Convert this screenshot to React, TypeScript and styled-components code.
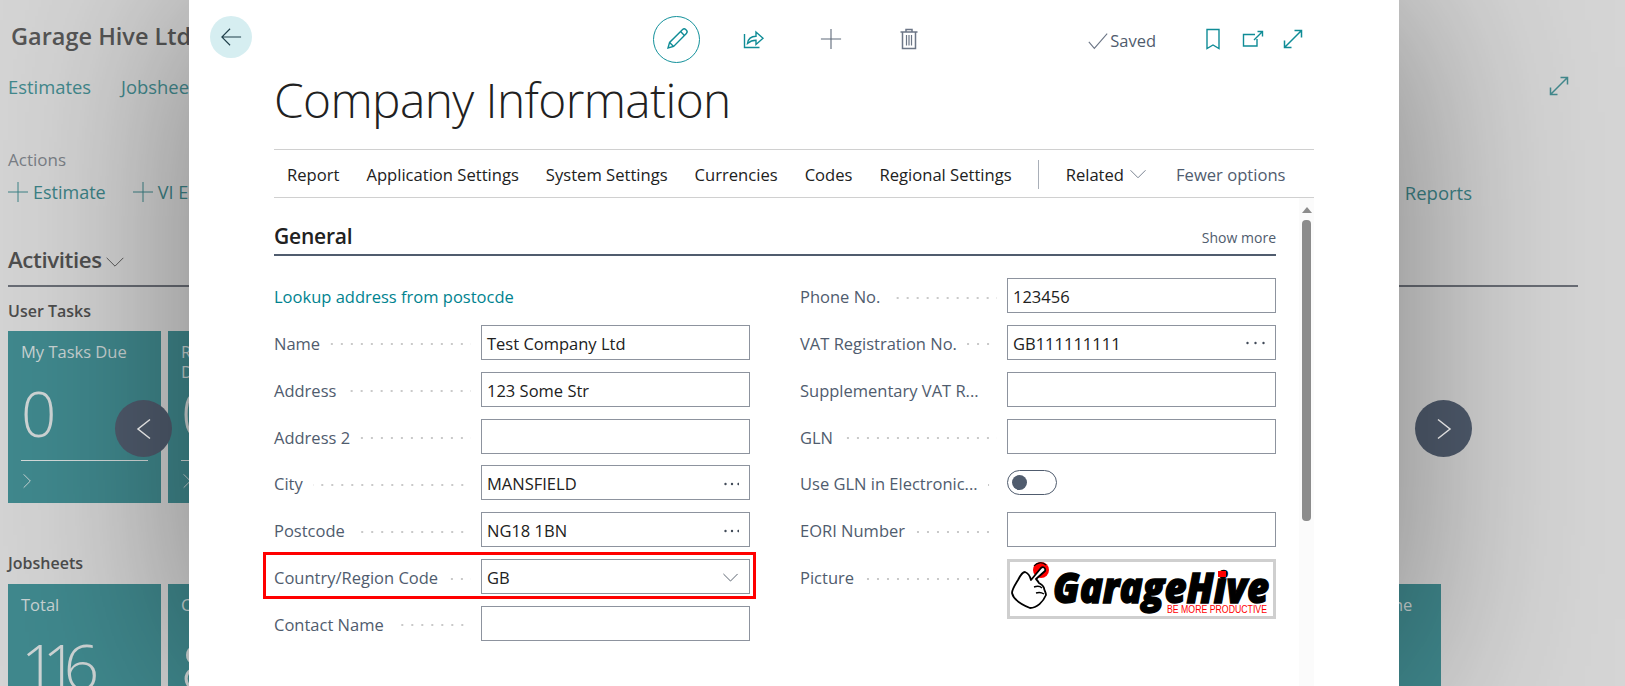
import React from "react";
import styled, { createGlobalStyle } from "styled-components";

const GlobalStyle = createGlobalStyle`
  html, body {
    margin: 0;
    height: 100%;
    overflow: hidden;
    background: #d5d5d5;
  }
  #root {
    height: 100%;
  }
  * {
    box-sizing: border-box;
  }
`;

const Page = styled.div`
  position: relative;
  width: 1625px;
  height: 686px;
  overflow: hidden;
  font-family: "Open Sans", "Liberation Sans", sans-serif;
  font-size: 16.5px;
`;

/* the role centre page, dimmed behind the dialog */
const Backdrop = styled.div`
  width: 1570px;
  margin-left: 8px;
  padding-top: 22px;
`;

const Brand = styled.div`
  height: 28px;
  padding-left: 3px;
  line-height: 28px;
  font-size: 23.5px;
  font-weight: 600;
  color: #565656;
  white-space: nowrap;
`;

const NavRow = styled.div`
  height: 28px;
  margin-top: 22px;
  padding-right: 9px;
  display: flex;
  align-items: center;
  gap: 30px;
  font-size: 18.4px;
  color: #42898d;
  svg {
    margin-left: auto;
  }
`;

const ActionsLabel = styled.div`
  height: 24px;
  margin-top: 48px;
  line-height: 24px;
  font-size: 17px;
  color: #7a7f86;
`;

const ActionsRow = styled.div`
  height: 28px;
  margin-top: 6px;
  padding-right: 106px;
  display: flex;
  align-items: center;
  font-size: 18px;
  color: #3c8286;
`;

const AddLink = styled.div<{ $left?: number }>`
  display: flex;
  align-items: center;
  gap: 5px;
  margin-left: ${(p) => p.$left ?? 0}px;
`;

const ReportsLink = styled.div`
  margin-left: auto;
  font-size: 18.5px;
`;

const ActivitiesHead = styled.div`
  height: 44px;
  margin-top: 37px;
  display: flex;
  align-items: flex-start;
  gap: 3px;
  border-bottom: 2px solid #696d75;
  font-size: 22.3px;
  font-weight: 600;
  line-height: 34px;
  color: #4f4f4f;
  letter-spacing: -0.4px;
  svg {
    margin-top: 9px;
  }
`;

const GroupLabel = styled.div<{ $top: number }>`
  height: 20px;
  margin-top: ${(p) => p.$top}px;
  line-height: 20px;
  font-size: 16px;
  font-weight: 600;
  color: #4d4d4d;
`;

const TileRow = styled.div<{ $top: number }>`
  margin-top: ${(p) => p.$top}px;
  display: flex;
  gap: 7px;
`;

const Tile = styled.div<{ $push?: boolean }>`
  flex: none;
  width: 153px;
  height: 172px;
  margin-left: ${(p) => (p.$push ? "auto" : "0")};
  margin-right: ${(p) => (p.$push ? "137px" : "0")};
  padding: 11px 13px 0;
  background: #40898e;
  color: #c9d4d4;
`;

const TileTitle = styled.div`
  height: 40px;
  font-size: 16.5px;
  line-height: 20px;
  white-space: pre-line;
`;

const TileValue = styled.div`
  height: 62px;
  font-size: 62px;
  font-weight: 300;
  line-height: 62px;
  color: #d0d6d6;
  letter-spacing: -14px;
`;

const TileRule = styled.div`
  height: 1px;
  margin-top: 16px;
  background: #d5dcdc;
`;

const TileLink = styled.div`
  margin: 10px 0 0 -4px;
`;

const Carousel = styled.div<{ $left: number }>`
  position: absolute;
  top: 400px;
  left: ${(p) => p.$left}px;
  width: 57px;
  height: 57px;
  border-radius: 50%;
  background: #505c6e;
  display: flex;
  align-items: center;
  justify-content: center;
`;

/* dialog */
const Dialog = styled.div`
  position: absolute;
  top: 0;
  left: 189px;
  width: 1210px;
  height: 686px;
  background: #fff;
  box-shadow: 0 0 190px rgba(0, 0, 0, 0.42);
  display: flex;
  flex-direction: column;
`;

const Header = styled.div`
  flex: none;
  height: 46px;
  margin-top: 16px;
  padding: 0 86px 0 21px;
  display: flex;
  align-items: center;
`;

const BackButton = styled.div`
  width: 42px;
  height: 42px;
  margin-top: -4px;
  border-radius: 50%;
  background: #d6eef1;
  display: flex;
  align-items: center;
  justify-content: center;
`;

const CommandGroup = styled.div`
  margin-left: 386px;
  display: flex;
`;

const CommandButton = styled.div`
  width: 77.3px;
  height: 46px;
  display: flex;
  align-items: center;
  justify-content: center;
`;

const EditRing = styled.div`
  width: 47px;
  height: 47px;
  border: 1px solid #13919b;
  border-radius: 50%;
  display: flex;
  align-items: center;
  justify-content: center;
`;

const SavedState = styled.div`
  margin: 3px 0 0 140px;
  display: flex;
  align-items: center;
  gap: 1px;
  color: #505c6e;
`;

const HeaderIcons = styled.div`
  margin-left: auto;
  display: flex;
`;

const HeaderIcon = styled.div`
  width: 40px;
  height: 46px;
  display: flex;
  align-items: center;
  justify-content: center;
`;

const Title = styled.h1`
  flex: none;
  height: 64px;
  margin: 6px 0 0 85px;
  font-size: 47.8px;
  font-weight: 300;
  line-height: 64px;
  color: #212121;
  letter-spacing: -0.6px;
`;

const ActionBar = styled.div`
  flex: none;
  height: 49px;
  margin: 17px 85px 0;
  padding: 1px 0 0 13px;
  border-top: 1px solid #d0d0d0;
  border-bottom: 1px solid #d0d0d0;
  display: flex;
  align-items: center;
  color: #212121;
  font-size: 16.6px;
`;

const BarItem = styled.div<{ $left: number }>`
  margin-left: ${(p) => p.$left}px;
  display: flex;
  align-items: center;
  gap: 5px;
  white-space: nowrap;
`;

const BarDivider = styled.div`
  width: 1px;
  height: 29px;
  margin-left: 26px;
  background: #a9afb8;
`;

const FewerOptions = styled(BarItem)`
  color: #505c6e;
`;

const Body = styled.div`
  flex: 1;
  min-height: 0;
  margin: 0 85px;
  display: flex;
`;

const Content = styled.div`
  flex: none;
  width: 1002px;
`;

const Scrollbar = styled.div`
  flex: none;
  width: 15px;
  margin-left: 23px;
  padding-top: 9px;
  background: #fbfbfb;
  display: flex;
  flex-direction: column;
  align-items: center;
`;

const ScrollArrow = styled.div`
  width: 0;
  height: 0;
  border-left: 5px solid transparent;
  border-right: 5px solid transparent;
  border-bottom: 6px solid #8c8c8c;
`;

const ScrollThumb = styled.div`
  width: 9px;
  height: 301px;
  margin-top: 7px;
  border-radius: 4px;
  background: #8c8c8c;
`;

const SectionHead = styled.div`
  height: 58px;
  padding-bottom: 4px;
  border-bottom: 2px solid #505c6e;
  display: flex;
  align-items: flex-end;
  justify-content: space-between;
`;

const SectionTitle = styled.div`
  font-size: 21px;
  font-weight: 600;
  line-height: 28px;
  color: #212121;
  letter-spacing: -0.2px;
`;

const ShowMore = styled.div`
  font-size: 14px;
  line-height: 24px;
  color: #505c6e;
`;

const Form = styled.div`
  margin-top: 22px;
  display: grid;
  grid-template-columns: 476px 476px;
  column-gap: 50px;
  align-items: start;
`;

const Column = styled.div`
  display: flex;
  flex-direction: column;
  gap: 11.85px;
`;

const LinkRow = styled.div`
  height: 35px;
  line-height: 38px;
  color: #00838f;
`;

const Row = styled.div`
  position: relative;
  height: 35px;
  display: grid;
  grid-template-columns: 207px 269px;
  align-items: start;
`;

const PictureRow = styled(Row)`
  height: 60px;
`;

const Label = styled.div`
  height: 35px;
  padding: 2px 10px 0 0;
  display: flex;
  align-items: center;
  color: #505c6e;
  white-space: nowrap;
`;

const Dots = styled.span`
  flex: 1;
  min-width: 0;
  height: 2px;
  margin: 2px 0 0 10px;
  background: radial-gradient(circle at 1px 1px, #c9c9c9 1px, transparent 1.2px) right / 10px 2px repeat-x;
`;

const Field = styled.div`
  height: 35px;
  padding: 2px 10px 0 5px;
  border: 1px solid #8d939e;
  display: flex;
  align-items: center;
  justify-content: space-between;
  color: #212121;
`;

const Toggle = styled.div`
  width: 50px;
  height: 25px;
  margin-top: 5px;
  padding-left: 4px;
  border: 1px solid #505c6e;
  border-radius: 13px;
  display: flex;
  align-items: center;
`;

const ToggleKnob = styled.div`
  width: 15px;
  height: 15px;
  border-radius: 50%;
  background: #505c6e;
`;

const PictureFrame = styled.div`
  width: 269px;
  height: 60px;
  border: 3px solid #cfcfcf;
`;

const Highlight = styled.div`
  position: absolute;
  top: -7px;
  right: -6px;
  bottom: -5px;
  left: -11px;
  border: 3px solid #f00;
  pointer-events: none;
`;

const LogoWord = styled.text`
  font-family: "Open Sans", "Liberation Sans", sans-serif;
  font-size: 43px;
  font-weight: 800;
  font-style: italic;
  fill: #000;
  stroke: #000;
  stroke-width: 1.4px;
`;

const LogoTag = styled.text`
  font-family: "Liberation Sans", sans-serif;
  font-size: 10.5px;
  fill: #f00;
`;

const teal = "#0f8c96";
const slate = "#6c7686";

function Line({ d, size = 20, color, width = 1.2 }: { d: string; size?: number; color: string; width?: number }) {
  return (
    <svg width={size} height={size} viewBox="0 0 24 24" fill="none" stroke={color} strokeWidth={width}>
      <path d={d} />
    </svg>
  );
}

function Pencil() {
  return (
    <svg width="24" height="24" viewBox="0 0 24 24" fill="none" stroke={teal} strokeWidth="1.4">
      <path d="M3 21l1.6-5.6L17.6 2.6a2.2 2.2 0 0 1 3.1 0l.7.7a2.2 2.2 0 0 1 0 3.1L8.6 19.4z" />
      <path d="M4.6 15.4l4 4M15.6 4.6l3.8 3.8" />
    </svg>
  );
}

function Share() {
  return (
    <svg width="22" height="22" viewBox="0 0 22 22" fill="none" stroke={teal} strokeWidth="1.4">
      <path d="M1.5 6v13.5h15" />
      <path d="M4.5 15.5c.6-4.6 4-7.2 8.5-7.2V4l7 6.3-7 6.2v-4.2c-3.4 0-6 1-8.5 3.2z" />
    </svg>
  );
}

function Trash() {
  return (
    <svg width="20" height="22" viewBox="0 0 20 22" fill="none" stroke={slate} strokeWidth="1.5">
      <path d="M1.5 4h17M7 4V1.5h6V4M3.5 4v16.5h13V4" />
      <path d="M7.5 7v10.5M10 7v10.5M12.5 7v10.5" strokeWidth="1.2" />
    </svg>
  );
}

function Bookmark() {
  return (
    <svg width="16" height="22" viewBox="0 0 16 22" fill="none" stroke={teal} strokeWidth="1.4">
      <path d="M2 1.5h12v19l-6-3.5-6 3.5z" />
    </svg>
  );
}

function OpenNew() {
  return (
    <svg width="22" height="18" viewBox="0 0 22 18" fill="none" stroke={teal} strokeWidth="1.4">
      <path d="M13 4.5H1.5V16h13.500V9" />
      <path d="M12 10l8-8M15.500 1.500h5v5" />
    </svg>
  );
}

function Expand({ color = teal }: { color?: string }) {
  return (
    <svg width="20" height="20" viewBox="0 0 20 20" fill="none" stroke={color} strokeWidth="1.5">
      <path d="M1.500 18.500l17-17M11.500 1.500h7v7M1.500 11.500v7h7" />
    </svg>
  );
}

function More({ wide }: { wide?: boolean }) {
  const gap = wide ? 8 : 6.5;
  return (
    <svg width={wide ? 19 : 15} height="4" viewBox={wide ? "0 0 19 4" : "0 0 15 4"} fill="#404a58">
      <circle cx="1.5" cy="2" r="1.2" />
      <circle cx={1.5 + gap} cy="2" r="1.2" />
      <circle cx={1.5 + gap * 2} cy="2" r="1.2" />
    </svg>
  );
}

function Logo() {
  return (
    <svg width="263" height="54" viewBox="0 0 263 54">
      <circle cx="31" cy="8" r="8" fill="#f00" />
      <path d="M24 4a8 8 0 0 1 12-1" fill="none" stroke="#000" strokeWidth="1.2" />
      <path
        d="M31 6 L21 18 C20 14 18 11 15 10 C12 10 10 14 8 18 C5 23 2 27 2 31 C3 36 8 41 20 46 C27 46 33 40 36 33 C36 30 34 28 34 26 C33 23 31 22 29 21 C28 19 27 18 26 17 L35 9 C36 6 33 4 31 6 Z"
        fill="#fff"
        stroke="#000"
        strokeWidth="1.8"
        strokeLinejoin="round"
      />
      <path d="M24 25c3-1 6-1 8 1M26 31c3-1 5-1 8 1" fill="none" stroke="#000" strokeWidth="1.4" />
      <LogoWord x="43" y="41" textLength="216" lengthAdjust="spacingAndGlyphs">
        GarageHive
      </LogoWord>
      <rect x="208" y="9" width="8" height="6" fill="#f00" />
      <LogoTag x="157" y="51" textLength="100" lengthAdjust="spacingAndGlyphs">
        BE MORE PRODUCTIVE
      </LogoTag>
    </svg>
  );
}

function BackgroundTile({ title, value, push }: { title: string; value: string; push?: boolean }) {
  return (
    <Tile $push={push}>
      <TileTitle>{title}</TileTitle>
      <TileValue>{value}</TileValue>
      <TileRule />
      <TileLink>
        <Line d="M8 4l8 8-8 8" size={20} color="#c9d4d4" />
      </TileLink>
    </Tile>
  );
}

const leftFields = [
  { label: "Name", value: "Test Company Ltd" },
  { label: "Address", value: "123 Some Str" },
  { label: "Address 2", value: "" },
  { label: "City", value: "MANSFIELD", more: true },
  { label: "Postcode", value: "NG18 1BN", more: true },
];

const rightFields = [
  { label: "Phone No.", value: "123456" },
  { label: "VAT Registration No.", value: "GB111111111", more: true },
  { label: "Supplementary VAT R...", value: "" },
  { label: "GLN", value: "" },
];

export default function App() {
  return (
    <Page>
      <GlobalStyle />
      <Backdrop>
        <Brand>Garage Hive Ltd</Brand>
        <NavRow>
          <span>Estimates</span>
          <span>Jobsheets</span>
          <Expand color="#42898d" />
        </NavRow>
        <ActionsLabel>Actions</ActionsLabel>
        <ActionsRow>
          <AddLink>
            <Line d="M12 0v24M0 12h24" size={20} color="#3c8286" />
            Estimate
          </AddLink>
          <AddLink $left={27}>
            <Line d="M12 0v24M0 12h24" size={20} color="#3c8286" />
            VI Estimate
          </AddLink>
          <ReportsLink>Reports</ReportsLink>
        </ActionsRow>
        <ActivitiesHead>
          Activities
          <Line d="M2 7l10 10L22 7" size={20} color="#5a5a5a" />
        </ActivitiesHead>
        <GroupLabel $top={14}>User Tasks</GroupLabel>
        <TileRow $top={10}>
          <BackgroundTile title="My Tasks Due" value="0" />
          <BackgroundTile title={"Requests\nDue"} value="0" />
        </TileRow>
        <GroupLabel $top={50}>Jobsheets</GroupLabel>
        <TileRow $top={11}>
          <BackgroundTile title="Total" value="116" />
          <BackgroundTile title="Completed" value="8" />
          <BackgroundTile title="Waiting Phone" value="2" push />
        </TileRow>
      </Backdrop>

      <Carousel $left={115}>
        <Line d="M18 2.500L6 12l12 9.500" size={24} color="#fff" width={1.5} />
      </Carousel>
      <Carousel $left={1415}>
        <Line d="M6 2.500L18 12 6 21.500" size={24} color="#fff" width={1.5} />
      </Carousel>

      <Dialog>
        <Header>
          <BackButton>
            <Line d="M11 3l-9 9 9 9M2 12h21" size={22} color="#1f3f4a" />
          </BackButton>
          <CommandGroup>
            <CommandButton>
              <EditRing>
                <Pencil />
              </EditRing>
            </CommandButton>
            <CommandButton>
              <Share />
            </CommandButton>
            <CommandButton>
              <Line d="M12 1v22M1 12h22" size={22} color="#5f6a7a" />
            </CommandButton>
            <CommandButton>
              <Trash />
            </CommandButton>
          </CommandGroup>
          <SavedState>
            <Line d="M2 13l6 7L22 4" size={22} color={slate} />
            Saved
          </SavedState>
          <HeaderIcons>
            <HeaderIcon>
              <Bookmark />
            </HeaderIcon>
            <HeaderIcon>
              <OpenNew />
            </HeaderIcon>
            <HeaderIcon>
              <Expand />
            </HeaderIcon>
          </HeaderIcons>
        </Header>
        <Title>Company Information</Title>
        <ActionBar>
          <BarItem $left={0}>Report</BarItem>
          <BarItem $left={27}>Application Settings</BarItem>
          <BarItem $left={27}>System Settings</BarItem>
          <BarItem $left={27}>Currencies</BarItem>
          <BarItem $left={27}>Codes</BarItem>
          <BarItem $left={27}>Regional Settings</BarItem>
          <BarDivider />
          <BarItem $left={27}>
            Related
            <Line d="M2 7l10 10L22 7" size={18} color={slate} />
          </BarItem>
          <FewerOptions $left={29}>Fewer options</FewerOptions>
        </ActionBar>
        <Body>
          <Content>
            <SectionHead>
              <SectionTitle>General</SectionTitle>
              <ShowMore>Show more</ShowMore>
            </SectionHead>
            <Form>
              <Column>
                <LinkRow>Lookup address from postocde</LinkRow>
                {leftFields.map((f) => (
                  <Row key={f.label}>
                    <Label>
                      {f.label}
                      <Dots />
                    </Label>
                    <Field>
                      {f.value}
                      {f.more && <More />}
                    </Field>
                  </Row>
                ))}
                <Row>
                  <Label>
                    Country/Region Code
                    <Dots />
                  </Label>
                  <Field>
                    GB
                    <Line d="M2 7l10 10L22 7" size={17} color="#404a58" />
                  </Field>
                  <Highlight />
                </Row>
                <Row>
                  <Label>
                    Contact Name
                    <Dots />
                  </Label>
                  <Field />
                </Row>
              </Column>
              <Column>
                {rightFields.map((f) => (
                  <Row key={f.label}>
                    <Label>
                      {f.label}
                      <Dots />
                    </Label>
                    <Field>
                      {f.value}
                      {f.more && <More wide />}
                    </Field>
                  </Row>
                ))}
                <Row>
                  <Label>
                    Use GLN in Electronic...
                    <Dots />
                  </Label>
                  <Toggle>
                    <ToggleKnob />
                  </Toggle>
                </Row>
                <Row>
                  <Label>
                    EORI Number
                    <Dots />
                  </Label>
                  <Field />
                </Row>
                <PictureRow>
                  <Label>
                    Picture
                    <Dots />
                  </Label>
                  <PictureFrame>
                    <Logo />
                  </PictureFrame>
                </PictureRow>
              </Column>
            </Form>
          </Content>
          <Scrollbar>
            <ScrollArrow />
            <ScrollThumb />
          </Scrollbar>
        </Body>
      </Dialog>
    </Page>
  );
}
